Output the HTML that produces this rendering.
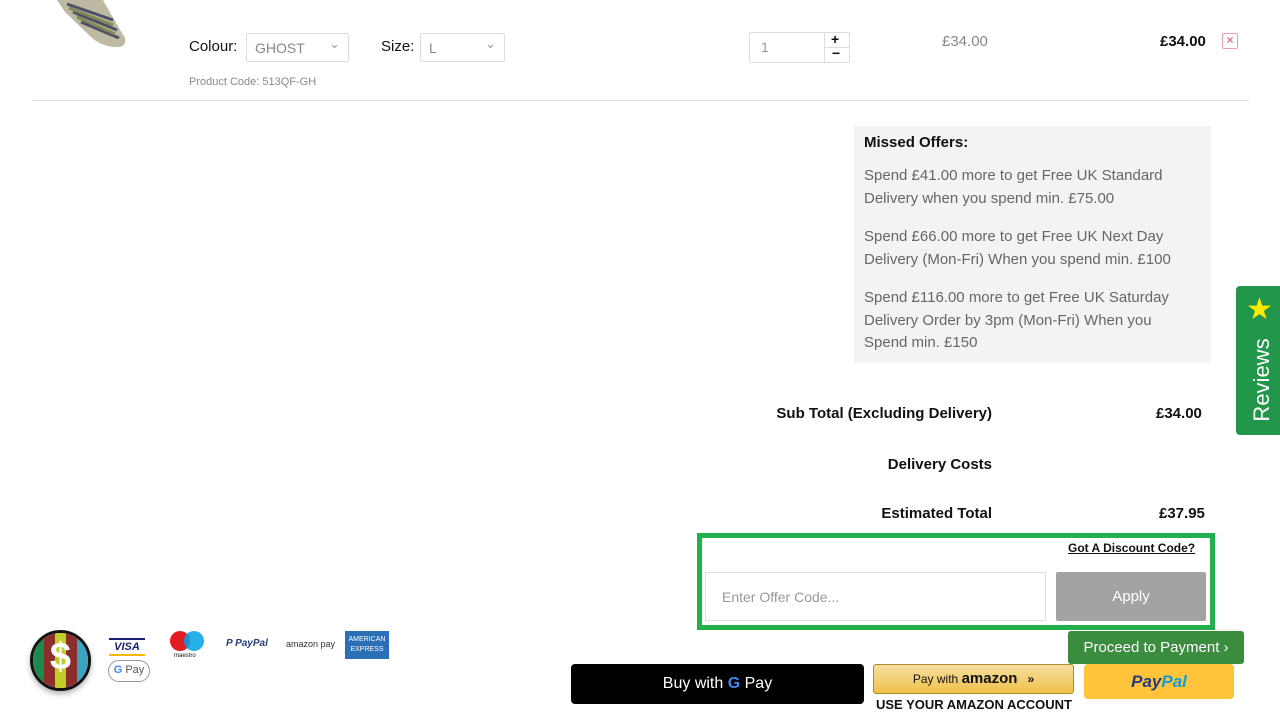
<!DOCTYPE html>
<html><head><meta charset="utf-8"><style>
*{box-sizing:border-box;margin:0;padding:0}
body{width:1280px;height:720px;overflow:hidden;background:#fff;font-family:"Liberation Sans",sans-serif;position:relative;color:#111}
.a{position:absolute}
.sel{position:absolute;border:1px solid #ddd;height:29px;font-size:14px;color:#888;padding:6px 8px;border-radius:2px}
.sel:after{content:"⌄";position:absolute;right:8px;top:2px;font-size:13px;color:#999}
.offer p{font-size:15px;color:#666;line-height:22.5px;margin-bottom:16px;width:320px}
</style></head><body>
<svg class="a" style="left:55px;top:0" width="75" height="50"><path d="M2 0 L48 0 Q62 25 70 38 Q72 48 60 47 Q45 46 35 36 L10 12 Z" fill="#bdb9a2"/><path d="M12 4 L58 20 M18 12 L62 30 M26 22 L64 38" stroke="#4d5066" stroke-width="3"/><path d="M14 8 L58 25 M22 17 L60 34" stroke="#7f8a55" stroke-width="3"/></svg>
<div class="a" style="left:189px;top:38px;font-size:15px">Colour:</div>
<div class="sel" style="left:246px;top:33px;width:103px">GHOST</div>
<div class="a" style="left:381px;top:38px;font-size:15px">Size:</div>
<div class="sel" style="left:420px;top:33px;width:85px">L</div>
<div class="a" style="left:189px;top:76px;font-size:11px;color:#888">Product Code: 513QF-GH</div>
<div class="a" style="left:749px;top:32px;width:101px;height:31px;border:1px solid #ddd;border-radius:2px"></div>
<div class="a" style="left:824px;top:32px;width:1px;height:31px;background:#ddd"></div>
<div class="a" style="left:824px;top:47px;width:26px;height:1px;background:#ddd"></div>
<div class="a" style="left:761px;top:39px;font-size:14px;color:#999">1</div>
<div class="a" style="left:831px;top:31px;font-size:14px;font-weight:bold">+</div>
<div class="a" style="left:832px;top:45px;font-size:14px;font-weight:bold">−</div>
<div class="a" style="left:942px;top:33px;font-size:15px;color:#888">£34.00</div>
<div class="a" style="left:1160px;top:33px;font-size:15px;font-weight:bold">£34.00</div>
<div class="a" style="left:1222px;top:33px;width:16px;height:16px;border:1.5px solid #e8a0a8;border-radius:2px;color:#e07080;font-size:12px;font-weight:bold;text-align:center;line-height:13px">×</div>
<div class="a" style="left:32px;top:100px;width:1217px;height:1px;background:#ddd"></div>
<div class="a offer" style="left:854px;top:126px;width:357px;height:237px;background:#f3f3f3;padding:8px 10px">
<div style="font-size:15px;font-weight:bold;margin-bottom:14px">Missed Offers:</div>
<p>Spend £41.00 more to get Free UK Standard Delivery when you spend min. £75.00</p>
<p>Spend £66.00 more to get Free UK Next Day Delivery (Mon-Fri) When you spend min. £100</p>
<p>Spend £116.00 more to get Free UK Saturday Delivery Order by 3pm (Mon-Fri) When you Spend min. £150</p>
</div>
<div class="a" style="left:1236px;top:286px;width:44px;height:149px;background:#22964a;border-radius:4px 0 0 4px"></div>
<div class="a" style="left:1246px;top:292px;color:#ffe800;font-size:30px">★</div>
<div class="a" style="left:1262px;top:380px;color:#fff;font-size:22px;transform:translate(-50%,-50%) rotate(-90deg);white-space:nowrap">Reviews</div>
<div class="a" style="left:700px;top:405px;width:292px;text-align:right;font-size:15px;font-weight:bold">Sub Total (Excluding Delivery)</div>
<div class="a" style="left:1156px;top:405px;font-size:15px;font-weight:bold">£34.00</div>
<div class="a" style="left:700px;top:456px;width:292px;text-align:right;font-size:15px;font-weight:bold">Delivery Costs</div>
<div class="a" style="left:700px;top:505px;width:292px;text-align:right;font-size:15px;font-weight:bold">Estimated Total</div>
<div class="a" style="left:1159px;top:505px;font-size:15px;font-weight:bold">£37.95</div>
<div class="a" style="left:697px;top:533px;width:518px;height:97px;border:5px solid #22b04e"></div>
<div class="a" style="left:1068px;top:541px;font-size:12px;font-weight:bold;text-decoration:underline">Got A Discount Code?</div>
<div class="a" style="left:705px;top:572px;width:341px;height:49px;border:1px solid #ddd;font-size:14px;color:#999;padding:16px 16px">Enter Offer Code...</div>
<div class="a" style="left:1056px;top:572px;width:150px;height:49px;background:#a3a3a3;color:#fff;font-size:15px;text-align:center;line-height:49px;border-radius:2px">Apply</div>
<div class="a" style="left:1068px;top:631px;width:176px;height:33px;background:#3a8c3f;color:#fff;font-size:15px;text-align:center;line-height:33px;border-radius:3px">Proceed to Payment ›</div>
<div class="a" style="left:571px;top:664px;width:293px;height:40px;background:#000;border-radius:4px;color:#fff;font-size:16px;text-align:center;line-height:40px">Buy with <b style="color:#4285f4">G</b> Pay</div>
<div class="a" style="left:873px;top:664px;width:201px;height:30px;background:linear-gradient(#f7dfa0,#f0c14b);border:1px solid #b38b2b;border-radius:3px;font-size:12px;text-align:center;line-height:28px">Pay with <b style="font-size:15px">amazon</b> &nbsp; <b>»</b></div>
<div class="a" style="left:876px;top:697px;font-size:13px;font-weight:bold">USE YOUR AMAZON ACCOUNT</div>
<div class="a" style="left:1084px;top:664px;width:150px;height:35px;background:#ffc439;border-radius:4px;text-align:center;line-height:35px;font-size:17px;font-weight:bold;font-style:italic"><span style="color:#253b80">Pay</span><span style="color:#179bd7">Pal</span></div>
<div class="a" style="left:30px;top:630px;width:61px;height:61px;border-radius:50%;border:3px solid #111;overflow:hidden;display:flex;box-shadow:0 3px 6px rgba(0,0,0,.3)"><div style="flex:1;background:#1e8a4e"></div><div style="flex:1;background:#8c2f2c"></div><div style="flex:1;background:#c2cc2a"></div><div style="flex:1;background:#8c2f2c"></div><div style="flex:1;background:#39a5c0"></div></div>
<div class="a" style="left:30px;top:636px;width:61px;text-align:center;color:#fff;font-size:38px;font-weight:bold">$</div>
<div class="a" style="left:109px;top:638px;width:36px;height:18px;border-top:2px solid #1a1f71;border-bottom:2px solid #f7b600;font-size:11px;font-weight:bold;font-style:italic;color:#1a1f71;text-align:center;line-height:14px">VISA</div>
<div class="a" style="left:108px;top:660px;width:42px;height:22px;border:1.5px solid #999;border-radius:11px;font-size:11px;text-align:center;line-height:19px;color:#555"><b style="color:#4285f4">G</b> Pay</div>
<div class="a" style="left:170px;top:631px;width:20px;height:20px;border-radius:50%;background:#e31b23"></div>
<div class="a" style="left:184px;top:631px;width:20px;height:20px;border-radius:50%;background:#00a2e5;opacity:.85"></div>
<div class="a" style="left:174px;top:653px;font-size:6px">maestro</div>
<div class="a" style="left:226px;top:638px;font-size:10px;font-weight:bold;font-style:italic;color:#253b80">P PayPal</div>
<div class="a" style="left:286px;top:639px;font-size:9px;color:#333">amazon pay</div>
<div class="a" style="left:345px;top:631px;width:44px;height:28px;background:#2b6fb6;color:#fff;font-size:7px;text-align:center;line-height:10px;padding-top:4px">AMERICAN<br>EXPRESS</div>
</body></html>
